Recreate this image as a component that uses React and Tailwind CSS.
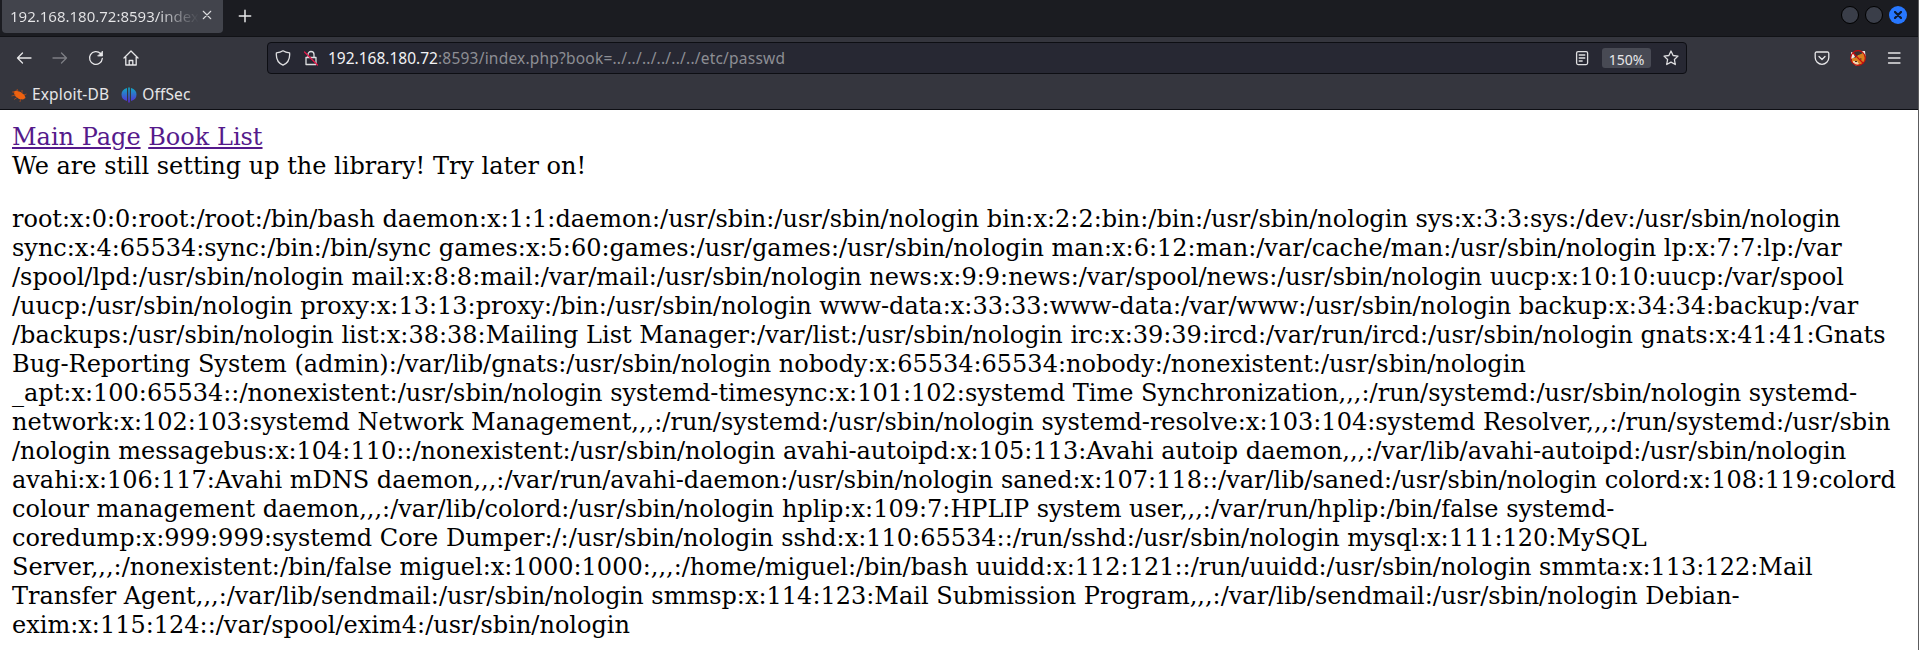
const passwd = [
  'root:x:0:0:root:/root:/bin/bash daemon:x:1:1:daemon:/usr/sbin:/usr/sbin/nologin bin:x:2:2:bin:/bin:/usr/sbin/nologin sys:x:3:3:sys:/dev:/usr/sbin/nologin',
  'sync:x:4:65534:sync:/bin:/bin/sync games:x:5:60:games:/usr/games:/usr/sbin/nologin man:x:6:12:man:/var/cache/man:/usr/sbin/nologin lp:x:7:7:lp:/var',
  '/spool/lpd:/usr/sbin/nologin mail:x:8:8:mail:/var/mail:/usr/sbin/nologin news:x:9:9:news:/var/spool/news:/usr/sbin/nologin uucp:x:10:10:uucp:/var/spool',
  '/uucp:/usr/sbin/nologin proxy:x:13:13:proxy:/bin:/usr/sbin/nologin www-data:x:33:33:www-data:/var/www:/usr/sbin/nologin backup:x:34:34:backup:/var',
  '/backups:/usr/sbin/nologin list:x:38:38:Mailing List Manager:/var/list:/usr/sbin/nologin irc:x:39:39:ircd:/var/run/ircd:/usr/sbin/nologin gnats:x:41:41:Gnats',
  'Bug-Reporting System (admin):/var/lib/gnats:/usr/sbin/nologin nobody:x:65534:65534:nobody:/nonexistent:/usr/sbin/nologin',
  '_apt:x:100:65534::/nonexistent:/usr/sbin/nologin systemd-timesync:x:101:102:systemd Time Synchronization,,,:/run/systemd:/usr/sbin/nologin systemd-',
  'network:x:102:103:systemd Network Management,,,:/run/systemd:/usr/sbin/nologin systemd-resolve:x:103:104:systemd Resolver,,,:/run/systemd:/usr/sbin',
  '/nologin messagebus:x:104:110::/nonexistent:/usr/sbin/nologin avahi-autoipd:x:105:113:Avahi autoip daemon,,,:/var/lib/avahi-autoipd:/usr/sbin/nologin',
  'avahi:x:106:117:Avahi mDNS daemon,,,:/var/run/avahi-daemon:/usr/sbin/nologin saned:x:107:118::/var/lib/saned:/usr/sbin/nologin colord:x:108:119:colord',
  'colour management daemon,,,:/var/lib/colord:/usr/sbin/nologin hplip:x:109:7:HPLIP system user,,,:/var/run/hplip:/bin/false systemd-',
  'coredump:x:999:999:systemd Core Dumper:/:/usr/sbin/nologin sshd:x:110:65534::/run/sshd:/usr/sbin/nologin mysql:x:111:120:MySQL',
  'Server,,,:/nonexistent:/bin/false miguel:x:1000:1000:,,,:/home/miguel:/bin/bash uuidd:x:112:121::/run/uuidd:/usr/sbin/nologin smmta:x:113:122:Mail',
  'Transfer Agent,,,:/var/lib/sendmail:/usr/sbin/nologin smmsp:x:114:123:Mail Submission Program,,,:/var/lib/sendmail:/usr/sbin/nologin Debian-',
  'exim:x:115:124::/var/spool/exim4:/usr/sbin/nologin',
];

function Icon({ children, className = '', size = 16 }) {
  return (
    <svg
      width={size}
      height={size}
      viewBox="0 0 16 16"
      fill="none"
      stroke="currentColor"
      strokeWidth="1.3"
      strokeLinecap="round"
      strokeLinejoin="round"
      className={'shrink-0 ' + className}
    >
      {children}
    </svg>
  );
}

function TabBar() {
  return (
    <div className="flex h-9 items-start bg-[#1b1c21] pl-0.5">
      <div className="flex h-[33px] w-[221px] items-start rounded-b bg-[#42444c] pl-2">
        <div className="w-[189px] whitespace-nowrap bg-linear-to-r from-[#e6e6e8] from-78% to-[#42444c] bg-clip-text pt-1 text-[15px] leading-6 text-transparent">
          192.168.180.72:8593/index.
        </div>
        <Icon size={10} className="ml-[3px] mt-2.5 text-[#dcdcde]">
          <path d="M2 2l12 12M14 2L2 14" strokeWidth="1.8" />
        </Icon>
      </div>
      <Icon size={14} className="ml-[15px] mt-[9px] text-[#e8e8ea]">
        <path d="M8 1.5v13M1.5 8h13" strokeWidth="1.7" />
      </Icon>
      <div className="ml-auto mr-[11px] mt-1.5 flex gap-1.5">
        <div className="size-[18px] rounded-full border border-black bg-[#3a3e49]" />
        <div className="size-[18px] rounded-full border border-black bg-[#3a3e49]" />
        <div className="flex size-[18px] items-center justify-center rounded-full bg-[#2777ff]">
          <Icon size={8} className="text-[#0e1a30]">
            <path d="M2 2l12 12M14 2L2 14" strokeWidth="4.5" />
          </Icon>
        </div>
      </div>
    </div>
  );
}

function UrlBar() {
  return (
    <div className="ml-[127px] flex h-8 w-[1420px] items-center rounded border border-[#0d0e13] bg-[#272833] pl-[7px] pr-[7px] text-[#dedee0]">
      <Icon>
        <path d="M8 .8C6 2.2 4 2.7 1.4 2.9C.9 8.5 2.5 12.8 8 15.2C13.5 12.8 15.1 8.5 14.6 2.9C12 2.7 10 2.2 8 .8z" />
      </Icon>
      <Icon className="ml-3">
        <path d="M3 7.5h10v7H3zM5 7.500V4.500a3 3 0 0 1 6 0v3" />
        <path d="M1.500 2L14.500 15" stroke="#e2184a" />
      </Icon>
      <div className="ml-[9px] whitespace-pre pt-0.5 text-[15.5px] tracking-[0.21px] text-[#8d8e94]">
        <span className="tracking-normal text-[#f2f2f4]">192.168.180.72</span>:8593/index.php?book=../../../../../../etc/passwd
      </div>
      <Icon className="ml-auto">
        <rect x="2.6" y="1.6" width="11" height="13" rx="1.5" />
        <path d="M5.2 5h5.600M5.200 8h5.600M5.200 11h3" />
      </Icon>
      <div className="ml-3 flex h-5 w-[49px] items-center justify-center rounded-[3px] bg-[#484a54] pt-0.5 text-[14px] text-[#e6e6e8]">150%</div>
      <Icon className="ml-3">
        <path d="M8 1l2.100 4.500 4.900.6-3.600 3.400.9 5L8 12.100 3.700 14.500l.9-5L1 6.100l4.900-.6z" />
      </Icon>
    </div>
  );
}

function FoxIcon() {
  return (
    <svg width="16" height="16" viewBox="0 0 16 16" className="shrink-0">
      <path d="M2 7l3 1 3-3 3-1 3-2 1.500 4-.5 5-3 3-6 1.500-4-3z" fill="#d9801f" />
      <path d="M1 2l3 1 1 4-4 2zM12 1l3 0 .5 5-2-2z" fill="#f3e9e2" />
      <path d="M4 2l6-1 2 2-4 2-3 2z" fill="#3b3032" />
      <path d="M3 11l4 0 2 3-3 1.500-3-2z" fill="#f4d3ae" />
      <path d="M5 11.500h2M10 9h1.500" stroke="#3b2a20" strokeWidth="1" />
      <circle cx="8" cy="8" r="7.300" fill="none" stroke="#c40d0d" strokeWidth="1.200" />
      <path d="M3 3l10 10" stroke="#c40d0d" strokeWidth="1.200" />
    </svg>
  );
}

export default function App() {
  return (
    <div className="h-[650px] w-full overflow-hidden border-r border-[#5c5c5e] bg-white font-['Noto_Sans',sans-serif]">
      <header className="h-[110px] border-b border-[#0d0e13] bg-[#35363e] text-[#e6e6e8]">
        <TabBar />
        <div className="flex h-[43px] items-center border-t border-[#111216] pl-4">
          <Icon><path d="M15 8H1.500M6.500 3L1.500 8l5 5" /></Icon>
          <Icon className="ml-5 text-[#7d7e84]"><path d="M1 8h13.500M9.500 3l5 5-5 5" /></Icon>
          <Icon className="ml-5">
            <path d="M14.300 8.500A6.400 6.400 0 1 1 12.500 3.500" />
            <path d="M14.500 1.500v4.500H10z" fill="currentColor" strokeWidth=".8" />
          </Icon>
          <Icon className="ml-[19px]">
            <path d="M1 8l7-7 7 7M2.800 7v8h10.400V7M6.200 15v-4.500h3.600V15" />
          </Icon>
          <div className="w-px" />
          <UrlBar />
          <Icon className="ml-auto">
            <path d="M2.500 2h11a1.300 1.300 0 0 1 1.300 1.300V7.500a6.800 6.800 0 0 1-13.600 0V3.300A1.300 1.300 0 0 1 2.500 2zM5 6.500l3 3 3-3" />
          </Icon>
          <div className="ml-5"><FoxIcon /></div>
          <Icon className="ml-5 mr-4"><path d="M2.500 3h11.500M2.500 8h11.500M2.500 13h11.500" /></Icon>
        </div>
        <div className="flex h-[29px] items-center pl-[11px] pt-0.5 text-[15.5px] tracking-[0.15px]">
          <svg width="16" height="16" viewBox="0 0 16 16">
            <path d="M2.500 4.500l3-1 4 1.500 4 3 1 3-2.500 1.500-4-.5-4-3z" fill="#ee6210" />
            <path d="M1 5l3 0M.5 9l4-1M3 12.500l3-2M9 15l.5-3M6 2l1.500 3M11 3l0 3M13 8l2.500-1" stroke="#a8481c" strokeWidth=".9" />
          </svg>
          <span className="ml-[5px]">Exploit-DB</span>
          <svg width="16" height="16" viewBox="0 0 16 16" className="ml-3">
            <defs>
              <linearGradient id="offsec" gradientUnits="userSpaceOnUse" x1="0" y1="0" x2="0" y2="16">
                <stop offset="0" stopColor="#0db0c4" />
                <stop offset="1" stopColor="#5a25d8" />
              </linearGradient>
            </defs>
            <path d="M6 1v13Q.5 12.500.5 7.500T6 1zM10 1v13Q15.500 12.500 15.500 7.500T10 1zM7.200.5h1.600v15H7.200z" fill="url(#offsec)" />
          </svg>
          <span className="ml-[5px]">OffSec</span>
        </div>
      </header>
      <main className="px-3 pt-[13px] font-['DejaVu_Serif',serif] text-2xl leading-[29px] whitespace-nowrap text-black">
        <div>
          <a className="text-[#551a8b] underline">Main Page</a> <a className="text-[#551a8b] underline">Book List</a>
        </div>
        <div>We are still setting up the library! Try later on!</div>
        <div className="mt-6">
          {passwd.map((line) => (
            <div key={line}>{line}</div>
          ))}
        </div>
      </main>
    </div>
  );
}
